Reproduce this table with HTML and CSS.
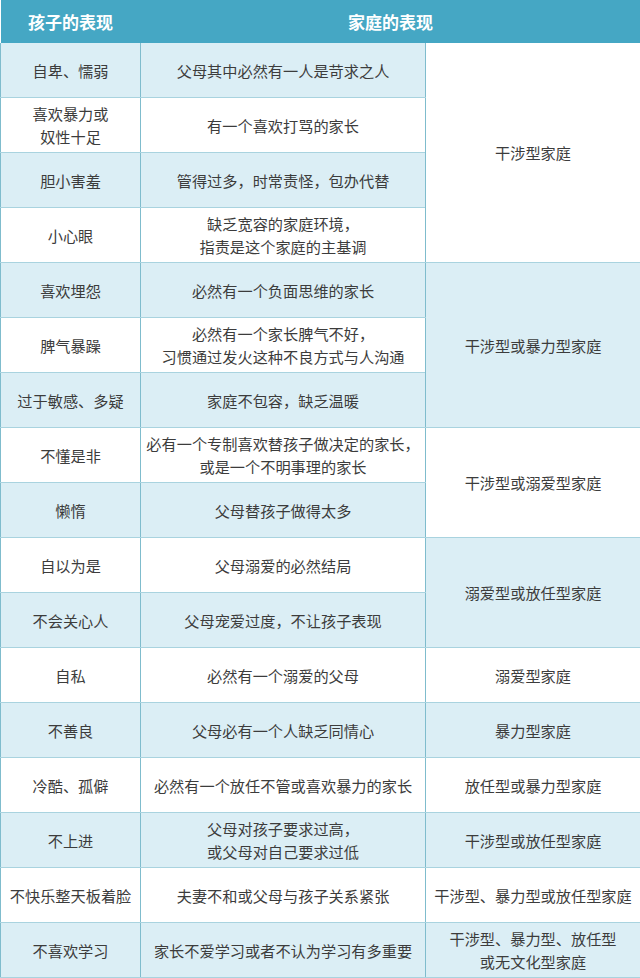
FILE: index.html
```html
<!DOCTYPE html>
<html lang="zh">
<head>
<meta charset="utf-8">
<link rel="stylesheet" href="styles.css">
</head>
<body>
<table class="grid">
  <colgroup>
    <col class="c1"><col class="c2"><col class="c3">
  </colgroup>
  <thead>
    <tr class="head"><th>孩子的表现</th><th colspan="2">家庭的表现</th></tr>
  </thead>
  <tbody>
    <tr class="alt"><td>自卑、懦弱</td><td>父母其中必然有一人是苛求之人</td><td rowspan="4" class="white">干涉型家庭</td></tr>
    <tr><td>喜欢暴力或<br>奴性十足</td><td>有一个喜欢打骂的家长</td></tr>
    <tr class="alt"><td>胆小害羞</td><td>管得过多，时常责怪，包办代替</td></tr>
    <tr><td>小心眼</td><td>缺乏宽容的家庭环境，<br>指责是这个家庭的主基调</td></tr>
    <tr class="alt"><td>喜欢埋怨</td><td>必然有一个负面思维的家长</td><td rowspan="3" class="light">干涉型或暴力型家庭</td></tr>
    <tr><td>脾气暴躁</td><td>必然有一个家长脾气不好，<br>习惯通过发火这种不良方式与人沟通</td></tr>
    <tr class="alt"><td>过于敏感、多疑</td><td>家庭不包容，缺乏温暖</td></tr>
    <tr><td>不懂是非</td><td>必有一个专制喜欢替孩子做决定的家长，<br>或是一个不明事理的家长</td><td rowspan="2" class="white">干涉型或溺爱型家庭</td></tr>
    <tr class="alt"><td>懒惰</td><td>父母替孩子做得太多</td></tr>
    <tr><td>自以为是</td><td>父母溺爱的必然结局</td><td rowspan="2" class="light">溺爱型或放任型家庭</td></tr>
    <tr class="alt"><td>不会关心人</td><td>父母宠爱过度，不让孩子表现</td></tr>
    <tr><td>自私</td><td>必然有一个溺爱的父母</td><td>溺爱型家庭</td></tr>
    <tr class="alt"><td>不善良</td><td>父母必有一个人缺乏同情心</td><td>暴力型家庭</td></tr>
    <tr><td>冷酷、孤僻</td><td>必然有一个放任不管或喜欢暴力的家长</td><td>放任型或暴力型家庭</td></tr>
    <tr class="alt"><td>不上进</td><td>父母对孩子要求过高，<br>或父母对自己要求过低</td><td>干涉型或放任型家庭</td></tr>
    <tr><td>不快乐整天板着脸</td><td>夫妻不和或父母与孩子关系紧张</td><td>干涉型、暴力型或放任型家庭</td></tr>
    <tr class="alt"><td>不喜欢学习</td><td>家长不爱学习或者不认为学习有多重要</td><td>干涉型、暴力型、放任型<br>或无文化型家庭</td></tr>
  </tbody>
</table>
</body>
</html>
```

FILE: styles.css
```css
html, body {
  margin: 0;
  padding: 0;
  background: #ffffff;
}

.grid {
  width: 640px;
  border-collapse: collapse;
  table-layout: fixed;
  font-family: "Noto Sans CJK SC", "Noto Sans", sans-serif;
  font-size: 15.2px;
  color: #3c3c3c;
}

.c1 { width: 140px; }
.c2 { width: 285px; }
.c3 { width: 215px; }

.head th {
  height: 43px;
  padding: 0;
  background: #45a7c4;
  color: #ffffff;
  font-size: 17px;
  font-weight: 700;
  text-align: center;
  border: none;
}

.grid td {
  height: 54px;
  padding: 0;
  text-align: center;
  vertical-align: middle;
  line-height: 23px;
  background: #ffffff;
  border-top: 1px solid #a9d3df;
  border-bottom: 1px solid #a9d3df;
  border-left: 1px solid #7fbccd;
  border-right: 1px solid #7fbccd;
  white-space: nowrap;
}

.grid tbody tr:first-child td {
  border-top: none;
}

.grid tr.alt td {
  background: #dbeef5;
}

.grid tr td.white {
  background: #ffffff;
}

.grid tr td.light {
  background: #dbeef5;
}
```
